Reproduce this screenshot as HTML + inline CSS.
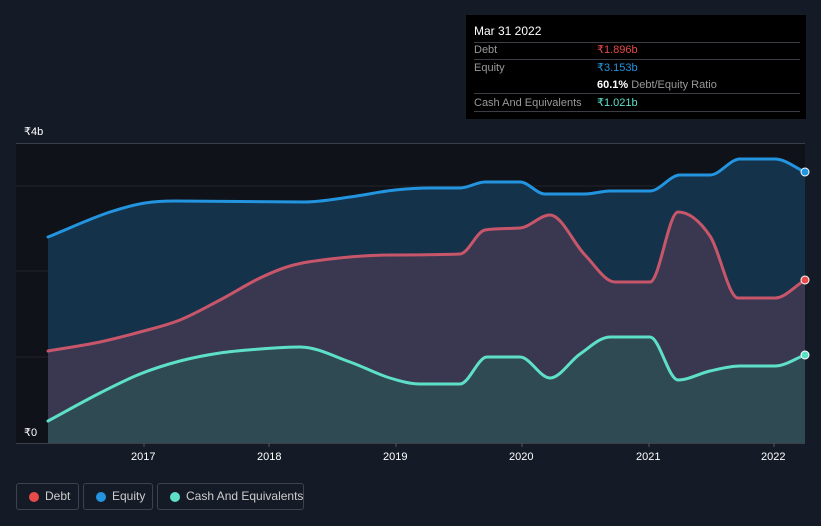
<!DOCTYPE html>
<html><head><meta charset="utf-8"><style>
html,body{margin:0;width:821px;height:526px;background:#151b26;font-family:"Liberation Sans",sans-serif;overflow:hidden;position:relative}
.tip{position:absolute;left:466px;top:15px;width:340px;height:104px;background:#000;color:#fff;font-size:11px}
.ln{position:absolute;left:8px;width:326px;height:1px;background:#3a3d44}
.t{position:absolute;line-height:14px;color:#999;white-space:nowrap}
.leg{position:absolute;top:483px;height:27px;border:1px solid #3d424c;border-radius:3px;color:#ccc;font-size:12px;line-height:25px;box-sizing:border-box;white-space:nowrap}
.leg i{position:absolute;top:8px;width:10px;height:10px;border-radius:50%}
.ax{position:absolute;font-size:11px;color:#fff}
</style></head><body>
<svg width="821" height="526" style="position:absolute;left:0;top:0">
<rect x="16" y="143" width="789" height="300" fill="#0f1218"/>
<line x1="16" y1="143.5" x2="805" y2="143.5" stroke="#3a3f48"/>
<line x1="16" y1="443.5" x2="805" y2="443.5" stroke="#3a3f48"/>
<g stroke="#ffffff" stroke-opacity="0.08"><line x1="16" y1="186" x2="805" y2="186"/><line x1="16" y1="271" x2="805" y2="271"/><line x1="16" y1="357" x2="805" y2="357"/></g>
<path id="fe" fill="#14324a"/><path id="fd" fill="#3a3850"/><path id="fc" fill="#2f4a52"/>
<g fill="none" stroke-width="3" stroke-linejoin="round" stroke-linecap="round">
<path id="le" stroke="#2394df"/><path id="ld" stroke="#c8566a"/><path id="lc" stroke="#5ee0c8"/>
</g>
<circle cx="805" cy="172" r="4" fill="#2394df" stroke="#fff"/>
<circle cx="805" cy="280" r="4" fill="#e84a4a" stroke="#fff"/>
<circle cx="805" cy="355" r="4" fill="#5ee0c8" stroke="#fff"/>
<g stroke="#555"><line x1="144" y1="443" x2="144" y2="447"/><line x1="269" y1="443" x2="269" y2="447"/><line x1="396" y1="443" x2="396" y2="447"/><line x1="522" y1="443" x2="522" y2="447"/><line x1="649" y1="443" x2="649" y2="447"/><line x1="774" y1="443" x2="774" y2="447"/></g>
</svg>
<script>
function sm(p){var n=p.length,s=[],m=[];
for(var i=0;i<n-1;i++)s.push((p[i+1][1]-p[i][1])/(p[i+1][0]-p[i][0]));
m[0]=s[0];m[n-1]=s[n-2];
for(i=1;i<n-1;i++){m[i]=(s[i-1]*s[i]<=0)?0:(s[i-1]+s[i])/2;}
for(i=0;i<n-1;i++){if(s[i]==0){m[i]=0;m[i+1]=0;continue;}var a=m[i]/s[i],b=m[i+1]/s[i],h=a*a+b*b;if(h>9){var t=3/Math.sqrt(h);m[i]=t*a*s[i];m[i+1]=t*b*s[i];}}
var d="M"+p[0][0]+","+p[0][1];
for(i=0;i<n-1;i++){var dx=(p[i+1][0]-p[i][0])/3;d+=" C"+(p[i][0]+dx)+","+(p[i][1]+m[i]*dx)+" "+(p[i+1][0]-dx)+","+(p[i+1][1]-m[i+1]*dx)+" "+p[i+1][0]+","+p[i+1][1];}
return d;}
function P(s){return s.split(" ").map(function(q){return q.split(",").map(Number)});}
var E=P("48,237 110,212 145,203 175,201 305,202 350,197 395,190 430,188 460,188 485,182 520,182 545,194 585,194 610,191 650,191 680,175 710,175 740,159 775,159 805,172");
var D=P("48,351 100,342 140,332 180,320 220,300 260,278 290,266 330,259 390,255 460,254 485,230 520,228 550,215 585,255 615,282 650,282 678,212 710,236 738,298 775,298 805,280");
var C=P("48,421 100,393 140,374 180,361 220,353 260,349 300,347 350,362 390,378 420,384 460,384 487,357 520,357 550,378 580,354 610,337 650,337 678,380 710,371 740,366 775,366 805,355");
[["e",E],["d",D],["c",C]].forEach(function(k){var s=sm(k[1]);document.getElementById("l"+k[0]).setAttribute("d",s);document.getElementById("f"+k[0]).setAttribute("d",s+" L805,443 L48,443 Z");});
</script>
<div class="ax" style="left:24px;top:125px">₹4b</div>
<div class="ax" style="left:24px;top:426px">₹0</div>
<div class="ax" style="left:131px;top:451px">2017</div>
<div class="ax" style="left:257px;top:451px">2018</div>
<div class="ax" style="left:383px;top:451px">2019</div>
<div class="ax" style="left:509px;top:451px">2020</div>
<div class="ax" style="left:636px;top:451px">2021</div>
<div class="ax" style="left:761px;top:451px">2022</div>
<div class="tip">
<div style="position:absolute;left:8px;top:9px;font-size:12px">Mar 31 2022</div>
<div class="ln" style="top:27px"></div>
<div class="t" style="left:8px;top:28px">Debt</div><div class="t" style="left:131px;top:28px;color:#e84a4a">₹1.896b</div>
<div class="ln" style="top:44px"></div>
<div class="t" style="left:8px;top:46px">Equity</div><div class="t" style="left:131px;top:46px;color:#2394df">₹3.153b</div>
<div class="t" style="left:131px;top:63px;color:#fff"><b>60.1%</b> <span style="color:#999">Debt/Equity Ratio</span></div>
<div class="ln" style="top:78px"></div>
<div class="t" style="left:8px;top:81px">Cash And Equivalents</div><div class="t" style="left:131px;top:81px;color:#5ee0c8">₹1.021b</div>
<div class="ln" style="top:96px"></div>
</div>
<div class="leg" style="left:16px;width:63px"><i style="left:12px;background:#e84a4a"></i><span style="position:absolute;left:28px">Debt</span></div>
<div class="leg" style="left:83px;width:70px"><i style="left:12px;background:#2394df"></i><span style="position:absolute;left:28px">Equity</span></div>
<div class="leg" style="left:157px;width:147px"><i style="left:12px;background:#5ee0c8"></i><span style="position:absolute;left:28px">Cash And Equivalents</span></div>
</body></html>
